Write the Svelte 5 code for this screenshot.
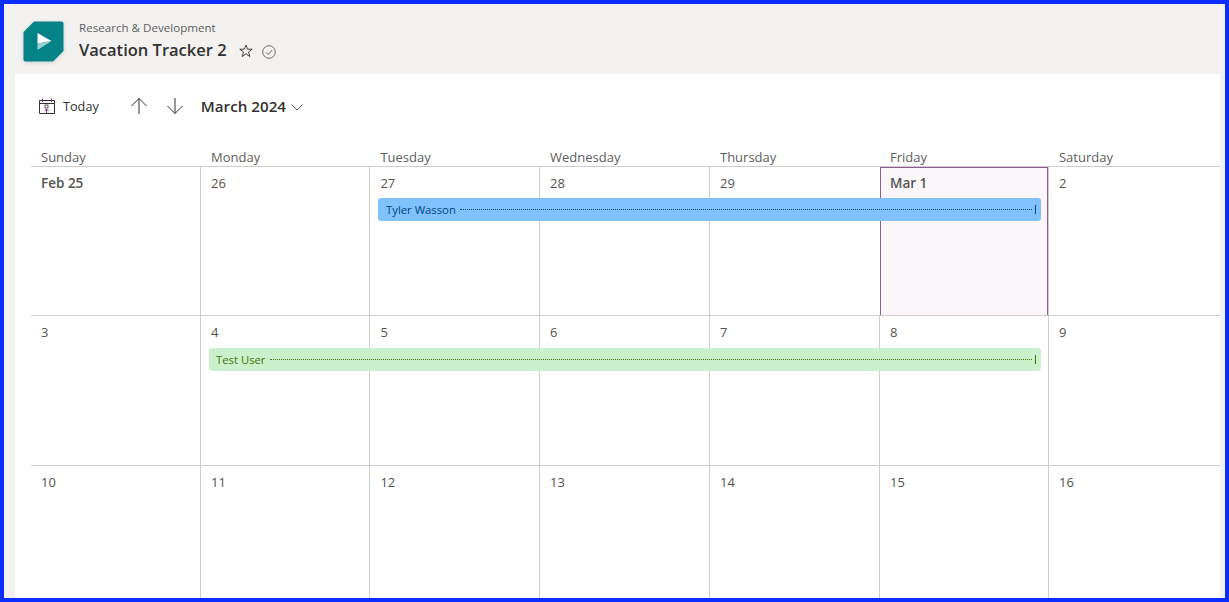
<script lang="ts">
  const dayNames = ["Sunday", "Monday", "Tuesday", "Wednesday", "Thursday", "Friday", "Saturday"];
  const weeks = [
    {
      days: ["Feb 25", "26", "27", "28", "29", "Mar 1", "2"],
      event: { name: "Tyler Wasson", kind: "blue" }
    },
    {
      days: ["3", "4", "5", "6", "7", "8", "9"],
      event: { name: "Test User", kind: "green" }
    },
    {
      days: ["10", "11", "12", "13", "14", "15", "16"],
      event: null
    }
  ];
</script>

<div class="frame">
  <header class="site-header">
    <div class="logo">
      <svg width="41" height="41" viewBox="0 0 41 41">
        <path d="M11 .5h27.500a2 2 0 0 1 2 2V30L30 40.500H2.500a2 2 0 0 1-2-2V11z" fill="#038387" />
        <path d="M14.500 12l14 8-14 2.500z" fill="#fff" />
        <path d="M14.500 22.500L28.500 20l-14 9z" fill="#9bd2d4" />
      </svg>
    </div>
    <div class="titles">
      <div class="group">Research &amp; Development</div>
      <div class="title-row">
        <span class="title">Vacation Tracker 2</span>
        <svg class="star" width="14" height="14" viewBox="0 0 14 14">
          <path d="M7 1l1.600 4.200h4.600L9.500 8l1.400 4.600L7 9.800l-3.900 2.800L4.500 8 .8 5.200h4.600z" fill="none" stroke="#323130" stroke-width=".9" />
        </svg>
        <svg class="check" width="14" height="14" viewBox="0 0 14 14">
          <circle cx="7" cy="7" r="6.300" fill="none" stroke="#605e5c" stroke-width=".9" />
          <path d="M4 7.300l2.200 2.200L10.200 5" fill="none" stroke="#605e5c" stroke-width=".9" />
        </svg>
      </div>
    </div>
  </header>

  <main class="panel">
    <div class="toolbar">
      <svg class="cal-icon" width="16" height="16" viewBox="0 0 16 16">
        <path d="M.5 2.500h15v13H.5zM.5 5.500h15" fill="none" stroke="#323130" />
        <path d="M3.500.5v3.500M12.500.5v3.500" fill="none" stroke="#7a2f8f" />
        <rect x="6" y="7" width="3" height="3" fill="none" stroke="#323130" stroke-width=".8" />
        <path d="M7.500 15.500v-4M5.500 13l2-2 2 2" fill="none" stroke="#7a2f8f" />
      </svg>
      <span class="today">Today</span>
      <svg class="arrow up" width="18" height="18" viewBox="0 0 18 18">
        <path d="M9 17V1.500M1.500 9L9 1.500 16.500 9" fill="none" stroke="#323130" />
      </svg>
      <svg class="arrow down" width="18" height="18" viewBox="0 0 18 18">
        <path d="M9 1v15.500M1.500 9L9 16.500 16.500 9" fill="none" stroke="#323130" />
      </svg>
      <span class="month">March 2024</span>
      <svg class="chevron" width="12" height="7" viewBox="0 0 12 7">
        <path d="M.5.500L6 6l5.500-5.500" fill="none" stroke="#605e5c" />
      </svg>
    </div>

    <div class="calendar">
      <div class="day-names">
        {#each dayNames as name}
          <div class="day-name">{name}</div>
        {/each}
      </div>
      {#each weeks as week}
        <div class="week">
          {#each week.days as day}
            <div class="cell" class:today-cell={day === "Mar 1"}>
              <span class="date" class:strong={day === "Feb 25" || day === "Mar 1"}>{day}</span>
            </div>
          {/each}
          {#if week.event}
            <div class="event {week.event.kind}">
              <span class="event-name">{week.event.name}</span>
              <span class="dots"></span>
              <span class="end"></span>
            </div>
          {/if}
        </div>
      {/each}
    </div>
  </main>
</div>

<style>
  :global(body) {
    margin: 0;
    overflow: hidden;
  }
  .frame {
    box-sizing: border-box;
    width: 1229px;
    height: 602px;
    border: 4px solid #0b2eff;
    background: #f3f2f1;
    display: flex;
    flex-direction: column;
    overflow: hidden;
    font-family: "Open Sans", "Noto Sans", sans-serif;
    color: #323130;
  }
  .site-header {
    height: 70px;
    flex: none;
    display: flex;
    padding-left: 19px;
    box-sizing: border-box;
  }
  .logo {
    margin-top: 17px;
    height: 41px;
    filter: drop-shadow(0 1px 2px rgba(0, 0, 0, 0.15));
  }
  .titles {
    margin-left: 15px;
  }
  .group {
    margin-top: 16px;
    font-size: 11.600px;
    line-height: 15px;
    color: #605e5c;
  }
  .title-row {
    display: flex;
    align-items: center;
    margin-top: 3px;
  }
  .title {
    font-size: 16.500px;
    line-height: 24px;
    font-weight: 600;
  }
  .star {
    margin-left: 12px;
    margin-top: 2px;
  }
  .check {
    margin-left: 9px;
    margin-top: 3px;
  }
  .panel {
    flex: 1;
    margin-left: 11px;
    margin-right: 5px;
    background: #fff;
    padding-left: 16px;
    min-height: 0;
  }
  .toolbar {
    height: 64px;
    display: flex;
    align-items: center;
    padding-left: 8px;
    box-sizing: border-box;
  }
  .today {
    margin-left: 8px;
    font-size: 12.700px;
  }
  .up {
    margin-left: 31px;
  }
  .down {
    margin-left: 18px;
  }
  .month {
    margin-left: 17px;
    font-size: 15.200px;
    font-weight: 600;
  }
  .chevron {
    margin-left: 5px;
    margin-top: 3px;
  }
  .calendar {
    margin-top: 11px;
  }
  .day-names,
  .week {
    display: grid;
    grid-template-columns: 169px 169.400px 169.600px 170px 170px 169px 172px;
    border-bottom: 1px solid #cfcdcb;
  }
  .day-names {
    height: 17px;
  }
  .day-name {
    padding-left: 11px;
    font-size: 13px;
    line-height: 17px;
    color: #605e5c;
  }
  .day-name:first-child {
    padding-left: 10px;
  }
  .week {
    position: relative;
    height: 149px;
  }
  .day-names + .week {
    height: 148px;
  }
  .cell {
    padding-left: 10px;
    border-left: 1px solid #cfcdcb;
    box-sizing: border-box;
  }
  .cell:first-child {
    border-left: 0;
  }
  .today-cell {
    background: #faf6fa;
    margin-left: 1px;
    padding-left: 9px;
    border: 1px solid #8f5c90;
    border-bottom: 0;
    z-index: 0;
  }
  .date {
    display: block;
    margin-top: 8px;
    font-size: 13px;
    font-weight: 500;
    line-height: 17px;
    color: #55534f;
  }
  .today-cell .date {
    margin-top: 7px;
  }
  .strong {
    font-weight: 600;
    font-size: 13.500px;
  }
  .event {
    position: absolute;
    top: 32px;
    height: 23px;
    border-radius: 3px;
    display: flex;
    align-items: center;
    box-sizing: border-box;
    padding-right: 5px;
    font-size: 11.300px;
  }
  .blue {
    top: 31px;
    left: 347px;
    width: 663px;
    background: #7fc2ff;
    color: #004578;
    padding-left: 8px;
  }
  .green {
    left: 178px;
    width: 832px;
    background: #caf0cc;
    color: #437406;
    padding-left: 7px;
  }
  .event-name {
    font-weight: 500;
  }
  .dots {
    flex: 1;
    margin-left: 4px;
    border-top: 1px dotted currentColor;
    height: 0;
  }
  .end {
    width: 1px;
    height: 9px;
    margin-left: 3px;
    background: currentColor;
  }
</style>
